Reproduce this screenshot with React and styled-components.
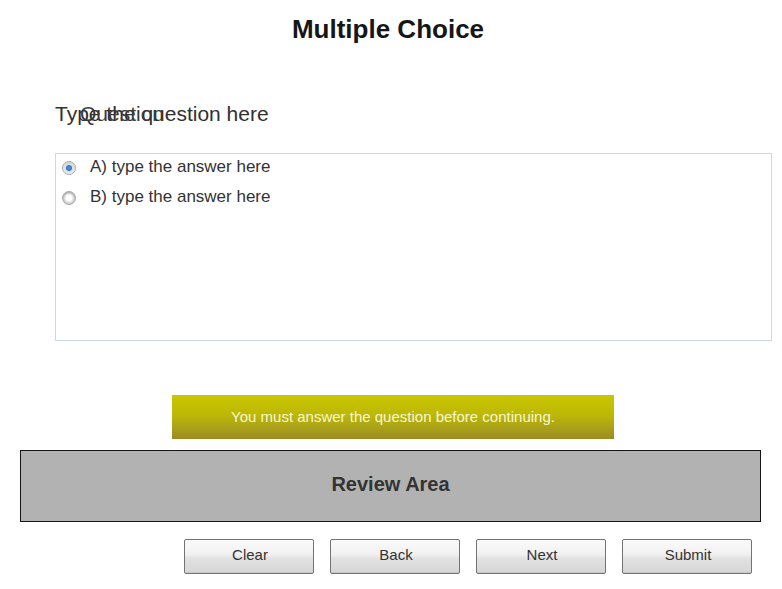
import React from "react";
import styled, { createGlobalStyle } from "styled-components";

const Global = createGlobalStyle`
  html, body { margin: 0; padding: 0; background: #ffffff; }
  body { font-family: "Liberation Sans", Arial, sans-serif; }
`;

const Page = styled.div`
  width: 782px;
  height: 589px;
  display: flex;
  flex-direction: column;
  overflow: hidden;
`;

const Title = styled.h1`
  margin: 0;
  padding-top: 14px;
  height: 30px;
  line-height: 30px;
  text-align: center;
  font-size: 26px;
  font-weight: bold;
  color: #161616;
  padding-right: 6px;
`;

const QuestionLine = styled.div`
  position: relative;
  margin: 58px 0 0 55px;
  height: 24px;
  line-height: 24px;
  font-size: 21px;
  color: #303030;
  white-space: nowrap;
`;

const QuestionOverlay = styled.span`
  position: absolute;
  left: 25px;
  top: 0;
  color: #3a3a3a;
`;

const AnswerBox = styled.div`
  box-sizing: border-box;
  margin: 27px 0 0 55px;
  width: 717px;
  height: 188px;
  border: 1px solid #cadbe2;
  padding: 2px 0 0 6px;
  display: flex;
  flex-direction: column;
  gap: 8px;
`;

const AnswerRow = styled.label`
  display: flex;
  align-items: center;
  height: 22px;
  gap: 14px;
  font-size: 17px;
  color: #333333;
`;

const Radio = styled.span`
  box-sizing: border-box;
  width: 14px;
  height: 14px;
  margin-top: 2px;
  border-radius: 50%;
  border: 1px solid #a9a9a9;
  background: ${(p) =>
    p.$checked
      ? "radial-gradient(circle at 50% 50%, #5a9ad6 0, #2f78c0 2.5px, #d8dde2 3.5px, #eef0f2 6px)"
      : "radial-gradient(circle at 50% 50%, #ffffff 0, #ffffff 3px, #e4e4e4 4px, #c8c8c8 6px)"};
  box-shadow: inset 0 1px 1px rgba(0, 0, 0, 0.15);
`;

const Banner = styled.div`
  box-sizing: border-box;
  margin: 54px 0 0 172px;
  width: 442px;
  height: 44px;
  padding-bottom: 2px;
  background: linear-gradient(to bottom, #c9c700 0%, #bdb806 45%, #a79d1c 80%, #9a8b22 100%);
  display: flex;
  align-items: center;
  justify-content: center;
  font-size: 15px;
  color: #f6f6d6;
`;

const ReviewArea = styled.div`
  box-sizing: border-box;
  margin: 11px 0 0 20px;
  width: 741px;
  height: 72px;
  padding-bottom: 3px;
  background: #b2b2b2;
  border: 1px solid #151515;
  display: flex;
  align-items: center;
  justify-content: center;
  font-size: 20px;
  font-weight: bold;
  color: #333333;
`;

const ButtonRow = styled.div`
  display: flex;
  gap: 16px;
  margin: 17px 0 0 184px;
`;

const Button = styled.button`
  box-sizing: border-box;
  width: 130px;
  height: 35px;
  border: 1px solid #737373;
  border-radius: 2px;
  background: linear-gradient(to bottom, #fbfbfb 0%, #f0f0f0 45%, #e2e2e2 55%, #d6d6d6 100%);
  font-family: "Liberation Sans", Arial, sans-serif;
  font-size: 15px;
  color: #333333;
  padding: 0 0 4px 2px;
  box-shadow: inset 0 -1px 0 #c8c8c8;
`;

export default function App() {
  return (
    <Page>
      <Global />
      <Title>Multiple Choice</Title>
      <QuestionLine>
        Type the question here
        <QuestionOverlay>Question</QuestionOverlay>
      </QuestionLine>
      <AnswerBox>
        <AnswerRow>
          <Radio $checked />
          A) type the answer here
        </AnswerRow>
        <AnswerRow>
          <Radio />
          B) type the answer here
        </AnswerRow>
      </AnswerBox>
      <Banner>You must answer the question before continuing.</Banner>
      <ReviewArea>Review Area</ReviewArea>
      <ButtonRow>
        <Button>Clear</Button>
        <Button>Back</Button>
        <Button>Next</Button>
        <Button>Submit</Button>
      </ButtonRow>
    </Page>
  );
}
